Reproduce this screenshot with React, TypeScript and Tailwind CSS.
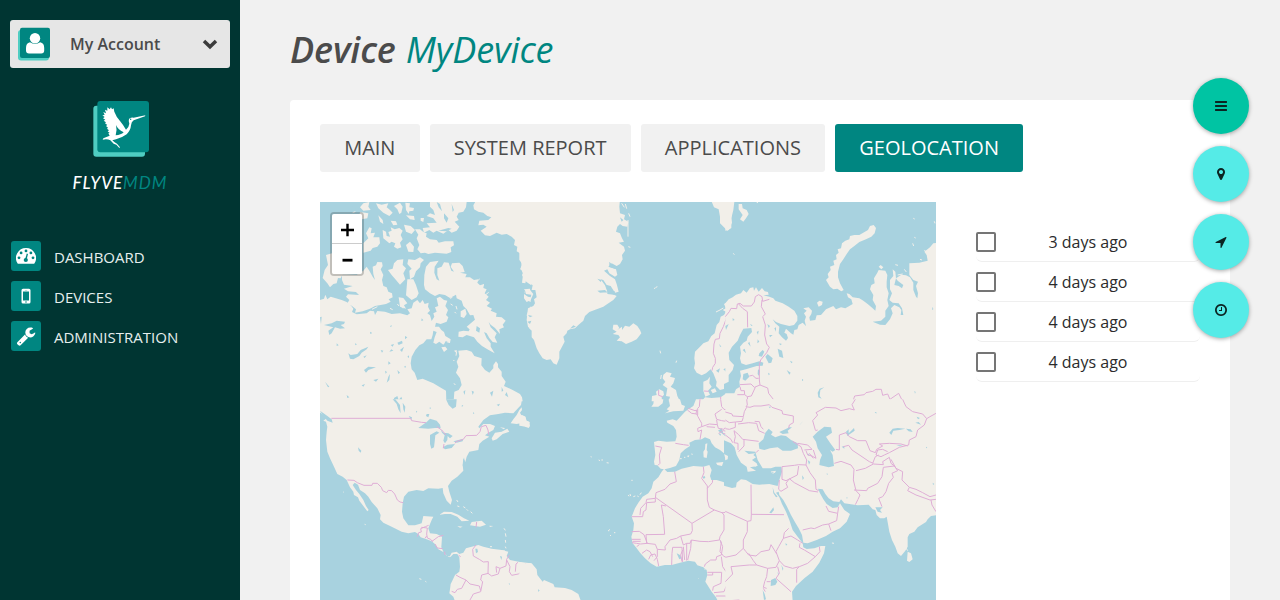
import React from "react";

const SEA = "#a8d2df";
const LAND = "#f2efe9";

type Sector = { x: number; y: number; land: string; water: string; islets: string; borders: string };

/* The map is divided in six sectors; each is drawn in thirds of a pixel. */
const SECTORS: Sector[] = [
  {
    x: 0,
    y: -2,
    land: `M18,165 L36,160 60,215 68,222 62,235 54,234 50,250 40,252 30,262 22,250 8,234 14,210 24,195Z
M66,222 L110,224 130,212 140,200 148,212 158,230 165,240 160,222 158,200 168,196 172,186 186,187 188,198 182,208 190,225 186,240 190,258 200,262 205,275 216,280 218,292 206,298 212,305 198,312 182,315 165,318 150,326 128,334 105,338 108,328 96,318 82,310 88,300 78,290 84,283 117,285 108,276 84,274 72,266 98,258 72,254 66,240Z
M0,300 L12,296 16,284 22,298 32,290 45,294 65,300 80,306 94,318 100,326 96,336 110,343 140,340 150,332 162,334 165,345 172,333 195,335 215,342 240,340 262,346 270,340 262,328 275,325 280,308 292,300 300,310 308,300 314,312 326,308 324,320 330,332 322,340 330,346 335,363 343,350 340,340 350,335 345,322 355,318 350,295 360,290 372,300 382,302 376,318 384,330 378,345 385,352 380,365 362,372 348,368 345,380 357,380 364,390 372,396 376,408 392,418 390,428 378,422 370,434 358,425 348,432 340,428 344,412 350,396 340,392 338,405 334,418 320,418 310,430 298,436 286,450 275,470 272,490 275,508 284,518 292,540 308,536 340,550 360,562 378,572 379,604 -3,604 -3,300Z
M401,604 L403,575 416,570 425,555 420,535 408,518 415,500 410,485 418,468 415,452 440,450 455,455 463,468 485,475 484,496 495,510 508,518 520,505 520,495 528,484 534,492 534,502 545,515 545,528 557,545 552,558 578,570 600,582 606,592 608,604Z
M312,255 L313,225 318,200 330,186 356,182 344,200 343,218 350,238 358,242 352,225 352,205 365,200 372,187 386,188 394,212 402,215 392,200 396,190 418,188 428,198 434,216 420,218 440,222 436,232 450,232 462,240 475,238 472,248 480,256 492,252 490,264 500,268 494,280 506,290 498,300 510,308 500,318 516,326 512,332 530,340 528,350 545,352 557,362 548,374 552,382 538,388 540,402 525,384 512,374 506,366 512,382 530,400 524,412 532,428 518,426 508,414 500,400 492,396 500,415 512,430 512,440 524,460 506,450 486,438 472,425 462,412 440,405 428,412 415,410 416,395 430,392 446,394 458,372 465,360 460,345 450,346 440,328 430,318 425,302 410,295 408,284 390,294 375,285 358,282 345,288 330,280 315,268Z
M204,210 L218,206 222,190 232,180 250,178 248,195 258,205 250,220 256,238 240,254 228,240 215,225Z
M265,178 L285,180 300,172 312,180 302,190 300,202 288,214 282,230 270,238 268,212 275,206 262,192Z
M262,238 L280,238 288,255 296,280 290,292 275,300 258,286Z
M285,88 L300,88 310,96 320,100 318,110 330,118 350,120 356,128 375,124 400,124 402,136 392,142 394,156 380,161 345,158 325,162 315,158 302,160 292,148 298,135 290,115 295,104Z
M330,6 L440,6 438,22 430,35 416,38 410,50 416,60 404,65 418,80 410,92 395,98 385,90 370,101 350,92 340,98 328,90 312,98 308,84 330,82 320,70 350,68 340,55 320,48 330,40 345,45 340,30 330,20Z
M470,-2 L460,16 462,28 475,35 490,38 502,48 514,52 505,60 478,62 475,76 490,74 500,80 482,92 495,106 510,108 530,98 545,104 560,102 575,110 585,120 582,135 592,140 590,154 600,160 602,182 606,198 600,208 612,212 606,225 612,240 625,250 634,256 634,-2Z
M120,36 L145,40 142,55 125,58 118,48Z M130,10 L148,6 145,20 152,30 130,32 120,22Z
M130,130 L145,115 138,100 148,82 155,85 152,100 165,98 160,112 178,112 180,130 172,140 158,144 152,152 130,158Z
M188,90 L198,95 200,108 210,110 205,96 215,92 212,82 224,88 238,84 248,92 242,105 248,118 240,128 244,142 232,146 222,140 226,130 215,125 208,130 190,115Z
M258,135 L270,125 282,140 280,156 265,155Z M252,74 L272,78 285,90 275,102 258,95Z
M168,10 L185,14 205,10 200,22 210,30 218,38 208,48 190,38 175,25Z M175,46 L188,60 190,72 180,65Z
M240,8 L248,20 244,38 238,42 232,28 222,18Z M256,8 L270,10 268,22 282,24 280,32 268,34 266,42 258,30Z
M258,46 L282,48 284,60 270,58Z M212,62 L228,64 232,74 220,76Z M302,54 L312,54 310,66 302,62Z
M422,334 L436,326 440,342 432,354 422,350Z M440,380 L470,355 478,370 500,388 485,405 462,400Z
M236,292 L250,294 262,310 252,316 258,326 240,320Z M364,442 L376,440 382,448 372,456Z M402,452 L410,450 410,460Z
M612,268 L630,266 632,285 622,282Z M632,285 L620,300 632,306Z M632,318 L620,345 628,385 634,390Z`,
    water: `M100,6 L118,12 115,25 95,30Z M350,6 L356,22 366,34 360,12Z M372,40 L385,55 380,68 372,55Z M395,12 L402,30 398,36Z M355,92 L385,84 395,86 380,94Z
M85,460 L92,465 112,462 122,450 145,440 140,448 125,458 118,468 100,478 90,476Z
M12,375 L35,370 50,362 75,365 72,372 62,375 75,385 60,386 45,382 35,400 28,405 25,392 40,382Z M132,510 L145,500 168,502 145,510 138,518Z
M205,530 L210,522 208,540 200,548Z M232,510 L240,518 235,522Z M212,435 L222,432 218,440Z M232,428 L246,422 248,430 236,435Z M208,455 L214,448 220,452Z
M240,450 L252,440 246,456Z M205,484 L212,490 205,494Z M160,540 L175,536 168,545Z M125,556 L135,552 130,560Z M222,594 L232,588 236,600 244,590 248,602 222,602Z
M400,545 L405,555 398,562Z M510,578 L520,572 516,590Z M430,575 L436,570 434,585Z M545,560 L550,572 545,575Z M560,576 L565,592 555,585Z M455,572 L462,575 458,585Z
M470,378 L480,385 478,398 468,392Z M488,484 L495,486 490,492Z M0,352 L5,350 3,372Z M15,545 L28,560 24,562Z M80,585 L88,592 82,594Z M182,450 L190,452 186,458Z M255,408 L262,412 255,418Z
M50,430 L56,436 50,438Z M130,470 L140,466 134,474Z M195,512 l6,4 -4,5Z M252,500 l6,-3 -2,7Z M105,430 l6,3 -5,3Z M262,470 l5,-4 0,8Z M150,395 l7,4 -6,3Z M305,355 l5,6 -6,2Z M210,378 l6,-2 -3,6Z`,
    islets: `M98,38 l8,-3 M220,65 l8,3 M268,52 l12,4 M392,312 l6,4 M408,318 l3,10 M404,336 l4,4 M366,424 l8,5 M380,425 l10,3 M410,455 l-2,12 M400,480 l3,3 M402,550 l4,5 M210,325 l8,4 M232,312 l5,6 M245,320 l4,5 M390,295 l7,-3 M172,320 l-16,8 M470,245 l9,-8 M480,262 l12,-8 M496,285 l10,-8`,
    borders: "",
  },
  {
    x: 200,
    y: -2,
    land: `M-2,-2 L300,-2 298,20 300,40 315,45 312,58 325,65 322,80 308,78 300,72 292,80 288,95 300,100 306,115 312,125 296,128 312,140 315,152 306,165 308,178 300,192 290,198 275,190 265,200 288,208 292,225 285,230 268,220 262,208 252,212 270,228 285,238 290,252 296,275 285,278 272,258 260,255 250,240 242,238 255,256 262,275 290,288 280,300 262,312 250,320 230,328 208,336 195,348 190,362 175,375 165,385 150,388 142,392 140,400 130,410 134,425 126,440 118,455 118,475 110,494 100,490 92,478 80,480 68,475 58,460 50,445 42,420 35,412 35,392 24,380 20,360 22,340 24,325 40,318 45,310 42,298 50,292 46,270 35,270 38,256 28,248 30,238 20,232 16,250 6,248 8,232 12,228 2,205 6,190 -2,180Z
M12,275 L30,270 40,282 32,300 20,306 12,295Z
M280,374 L292,374 298,384 292,390 306,380 306,390 315,377 328,380 340,370 352,378 360,390 364,400 350,418 335,425 318,432 305,424 290,422 300,412 295,405 278,402 290,395 278,388Z
M572,-2 L582,22 596,28 600,50 600,70 612,82 622,92 634,84 634,-2Z
M634,300 L612,312 618,325 608,330 618,335 612,345 602,350 598,366 590,375 584,400 574,408 565,424 550,430 540,440 525,455 523,475 525,490 522,505 530,518 545,526 558,520 572,508 580,520 590,545 588,558 600,570 620,565 634,562Z
M550,572 L550,545 562,540 570,530 568,550 575,560 564,572 570,584 556,590Z M572,570 L585,565 590,575 578,580Z
M430,524 L440,516 455,520 450,530 465,534 460,550 452,560 468,570 472,588 480,604 446,604 450,590 438,588 442,565 428,555 436,545 428,535Z
M395,604 L396,588 410,585 408,575 418,568 430,574 432,584 425,592 426,604Z
M630,572 L602,592 575,594 555,592 545,604 634,604Z`,
    water: `M262,256 L272,262 272,275 285,274 282,284 262,282Z M232,272 L255,270 262,277 240,278Z M232,236 L245,240 242,246Z M268,185 L278,196 290,200 285,206 268,200Z M300,52 L310,60 305,65Z M588,512 L600,505 596,518Z M610,508 L622,502 618,515Z M598,432 L604,440 600,440Z M14,270 L18,282 34,284 32,292 24,290 12,282Z M160,376 L150,386 168,380Z M24,345 L38,348 30,352Z M22,365 L34,362 30,372Z`,
    islets: `M402,266 l5,-3 M408,262 l4,-2 M420,452 l2,8 M468,488 l2,-6 M324,60 l0,50 M316,12 l4,14 M326,40 l4,10 M325,140 l6,2 M424,525 l-2,12 M600,330 l10,-6 M588,336 l12,-6 M305,10 l8,12`,
    borders: `M628,336 L622,340 618,358 610,380 600,400 598,416 586,418 582,432 580,460 586,475 586,490 578,502 576,512 M416,570 L416,586 428,590 M552,573 L566,574 M602,590 L602,603 M536,600 L545,596`,
  },
  {
    x: 406,
    y: -2,
    land: `M-2,-2 L26,-2 22,30 16,55 18,68 8,90 -2,92Z M38,12 L48,12 50,25 62,30 68,42 60,55 52,65 42,58 50,45 38,28Z
M426,90 L432,78 443,75 450,84 446,100 436,110 420,118 400,126 385,138 372,148 362,162 352,178 342,192 336,215 336,232 342,250 353,270 346,274 334,266 322,268 312,260 300,240 308,232 305,222 314,210 312,200 325,195 322,182 332,178 330,165 338,158 335,148 345,145 348,130 358,122 370,118 372,108 385,105 400,105Z
M-2,310 L8,298 20,292 30,284 45,280 52,270 62,278 72,264 82,262 84,272 90,262 98,275 108,264 116,274 126,276 128,284 112,286 130,290 142,295 148,302 170,310 188,320 205,332 214,348 214,362 204,375 190,378 165,372 150,366 140,358 148,370 160,380 158,400 168,412 180,422 186,414 182,402 175,398 180,386 195,400 202,404 205,390 214,388 218,375 230,368 240,378 236,362 240,350 234,340 242,332 232,325 248,322 258,332 256,342 250,352 252,362 268,360 272,346 285,345 300,328 322,318 330,328 345,322 358,325 370,318 380,312 376,298 366,292 362,280 370,282 380,292 400,295 412,302 425,312 440,325 448,332 450,318 440,300 442,285 432,268 436,255 446,250 444,235 454,218 458,210 478,212 484,225 482,245 482,262 488,280 484,300 488,318 478,332 478,350 465,362 440,365 462,374 478,375 492,358 500,340 495,325 505,315 520,322 526,330 524,345 532,345 528,325 518,310 500,308 490,300 498,280 492,268 492,240 502,228 500,208 508,215 510,235 505,255 518,258 528,265 532,255 515,242 510,235 526,224 540,226 552,232 562,248 562,270 570,290 574,295 576,280 570,258 576,245 562,240 550,225 550,190 580,188 605,182 602,165 595,155 612,142 622,130 634,128 634,604 -2,604Z
M273,308 L280,302 290,305 288,315 278,320Z M458,200 L464,195 472,202 466,208Z`,
    water: `M52,386 L76,384 78,396 65,410 62,422 52,428 42,440 45,460 42,475 46,490 60,495 80,490 100,484 112,488 110,497 92,498 72,504 60,508 42,512 45,528 40,545 42,560 30,568 25,580 -6,580 -6,552 8,545 8,525 20,510 24,495 10,480 8,458 18,440 35,422 42,405Z
M52,522 L65,518 70,530 58,542 50,538Z M118,470 L125,462 140,475 136,488 128,490Z M96,508 L102,512 98,528 95,522Z M155,446 L168,452 172,474 160,470Z M160,430 L168,432 162,436Z M182,510 L194,518 190,524Z M124,372 L132,378 128,384Z M145,385 L150,382 150,395Z M130,405 L140,405 132,412Z M95,418 L100,425 94,430Z M66,430 L70,425 74,440Z M50,450 L56,446 60,460Z M100,460 L110,450 115,455 108,470 98,468Z M126,518 l6,4 -4,4Z M228,536 l4,4 -4,4Z M20,354 L26,360 20,362Z M-2,378 L8,372 0,390Z M92,396 l6,-4 -2,12Z M72,372 l8,4 -4,2Z M192,482 l8,4 -4,4Z M275,578 l6,-12 14,-4 -12,8 -2,18 6,8 -10,-4Z M565,572 l4,4 -2,5Z M620,320 l2,8 -4,2Z`,
    islets: `M22,160 l3,4 M560,130 l3,8 M508,194 l8,2 M535,208 l6,8 M625,64 l2,6 M562,55 l4,2 M582,178 l6,2 M565,112 l4,2 M595,150 l8,8 M600,160 l8,3 M92,7 l4,1 M515,225 l15,-3`,
    borders: `M-2,350 L10,335 15,325 32,326 34,312 42,310 52,318 76,318 85,306 88,290 98,284 108,290 110,304 130,298 M38,312 L50,325 64,335 65,382 M108,300 L106,320 118,342 110,350 118,375 116,405 122,432 130,442 122,458 104,480 100,495 100,540 102,555 M70,528 L80,526 90,535 98,535 M42,554 L75,552 85,562 102,555 125,564 128,580 142,598 M42,560 L45,572 55,572 56,584 34,584 M56,584 L64,590 76,588 88,562 M64,590 L65,603 M382,600 L386,588 415,584 420,578 440,574 450,568 466,568 470,586 485,582 492,598 518,580 528,600`,
  },
  {
    x: 0,
    y: 198,
    land: `M-2,-2 L-2,36 12,46 20,55 10,62 18,65 22,80 20,95 18,120 22,155 30,175 42,200 52,222 68,230 80,240 90,262 100,275 102,285 114,292 118,302 130,318 142,334 146,330 138,318 130,300 118,282 108,270 98,255 104,248 114,254 120,270 135,280 145,290 155,306 172,325 182,345 180,358 190,368 215,380 245,395 265,400 285,396 295,402 302,412 320,418 335,424 345,432 355,448 370,456 378,466 392,470 400,462 412,462 418,472 420,500 418,515 405,525 398,540 392,552 390,568 388,580 400,590 405,604 633,604 633,490 600,486 570,480 560,468 565,455 545,450 515,446 490,440 475,435 455,440 438,445 430,458 418,462 410,455 395,458 388,472 372,460 364,442 366,410 350,402 330,400 325,385 335,360 340,350 310,348 305,370 285,376 265,376 250,355 246,335 248,310 252,290 265,275 290,270 310,273 325,265 355,266 368,264 370,280 380,302 392,314 396,300 388,275 384,258 395,242 412,230 430,212 428,195 430,175 436,186 440,170 448,155 475,150 478,132 488,122 508,110 495,106 505,98 520,90 525,78 510,72 490,72 478,85 475,80 490,60 510,46 535,42 555,38 580,40 603,15 606,-2Z
M515,115 L525,98 545,95 562,86 568,95 548,102 530,118 518,122Z M540,82 L555,84 552,88Z
M605,22 L598,30 590,45 580,58 572,70 590,72 602,70 598,78 612,74 618,82 626,76 629,66 620,62 616,50 604,46 600,38 606,30Z
M358,344 L372,335 395,336 415,344 432,355 448,362 425,364 412,350 392,342 375,342Z M455,366 L485,362 498,374 480,380 465,378 450,376Z M412,378 L428,380 420,383Z M508,377 L520,378 510,381Z`,
    water: `M0,32 L18,45 35,58 38,68 22,62 10,48Z M218,-2 L230,12 235,28 242,40 240,15 226,-2Z M248,8 L256,20 254,38 250,28Z M378,-2 L410,-2 408,20 398,26 386,15Z
M295,84 L320,66 330,56 350,62 360,74 362,84 345,84 325,86Z M330,105 L350,94 358,98 346,106 344,125 342,142 334,146 330,132Z M362,88 L370,98 385,100 398,108 390,115 383,108 382,120 375,130 370,122 374,106 366,98Z M368,142 L382,134 405,132 395,144 375,148Z M400,124 L415,120 430,116 428,124 410,128Z
M320,42 L328,42 325,52 318,48Z M266,48 L276,52 274,60Z M114,142 L124,152 122,158 116,152Z M466,446 L472,446 474,456 468,460Z M540,468 l6,2 -2,10Z M530,14 l10,-3 -4,8Z M550,48 l18,-8 -6,12Z M525,55 L560,52 558,66 540,64 530,78Z M432,172 L428,198 434,184Z M566,548 l4,4 -2,3Z M426,14 l4,4 -5,2Z M460,35 l3,6 -4,0Z M288,32 l4,3 -4,3Z M282,10 l4,8 M330,20 l3,6 -4,0Z`,
    islets: `M410,300 l4,6 M412,318 l6,2 M430,320 l6,4 M452,335 l5,5 M552,385 l4,6 M556,400 l2,10 M556,420 l1,8 M556,440 l2,5 M545,452 l10,1 M440,328 l4,4 M510,440 l6,0 M70,276 l2,1 M134,373 l3,1 M298,536 l6,2 M316,544 l3,2`,
    borders: `M34,55 L272,55 275,62 305,67 318,68 M350,80 L365,90 378,105 M370,145 L372,132 M405,130 L408,125 430,118 438,107 470,106 480,95 484,80 498,76 504,90 506,104 M82,240 L102,241 112,248 132,256 156,256 158,250 172,250 184,262 188,272 200,278 205,271 215,272 224,282 232,300 240,306 250,308 M292,410 L296,398 304,396 302,386 316,380 326,376 M304,382 L322,384 320,402 322,414 332,418 338,425 M315,415 L320,408 M336,424 L355,410 370,406 M345,432 L352,444 368,446 M374,455 L375,465 M416,466 L422,470 M468,435 L458,448 460,468 478,478 490,486 505,485 504,520 515,528 535,522 540,505 528,500 530,518 M540,505 L558,498 560,478 568,465 M560,480 L570,500 568,515 575,526 595,522 605,515 612,518 632,520 M586,515 L588,492 594,487 M617,490 L616,518 M505,520 L485,525 482,540 488,545 482,575 460,582 450,600 M408,525 L420,532 438,540 425,565 412,568 405,578 395,574 M438,540 L450,552 478,558 482,572 M470,366 L468,382`,
  },
  {
    x: 200,
    y: 198,
    land: `M-2,46 L8,46 16,50 18,62 28,66 30,78 26,84 16,80 4,78 -2,76Z
M402,-2 L400,12 394,20 415,20 428,10 430,-2Z M446,-2 L450,18 440,28 448,32 435,40 460,34 490,32 495,18 485,14 480,-2Z
M632,-2 L528,-2 520,18 505,28 495,35 480,52 470,62 458,58 440,62 442,68 460,78 468,90 470,110 466,124 440,125 415,122 402,126 404,145 406,165 402,185 404,195 412,196 422,206 434,208 450,204 468,198 478,180 482,160 495,148 510,138 508,128 525,120 545,118 555,112 570,118 575,130 585,142 600,150 612,160 618,185 625,172 620,158 632,164 633,125 620,112 605,100 594,92 605,85 610,100 633,120Z
M633,258 L610,246 590,240 574,240 570,228 575,210 568,195 550,200 520,198 485,206 465,215 442,216 432,206 425,215 415,232 400,245 395,265 385,280 368,290 355,308 345,325 335,350 342,370 340,390 334,410 338,430 350,445 360,458 375,475 392,490 410,500 435,495 455,495 480,488 505,482 525,485 532,496 550,502 560,510 562,525 556,545 575,575 588,592 594,604 633,604Z
M-2,486 L15,490 35,490 50,508 52,525 68,545 72,540 100,552 104,562 135,564 155,570 175,582 183,604 -2,604Z
M556,132 L562,130 560,150 563,155 560,174 551,172 550,155 555,148Z M588,188 L610,186 606,198 592,195Z M500,168 L508,166 506,172Z`,
    water: `M470,460 L480,465 485,475 478,478Z M548,230 l6,-2 2,6 -6,2Z M54,568 l5,3 -4,5Z M595,100 l8,2 -2,6Z M2,520 l2,3Z M562,500 l3,3Z M600,420 l4,6 -3,2Z`,
    islets: `M212,170 l3,1 M236,180 l4,2 M244,180 l5,0 M260,188 l6,1 M334,241 l4,0 M324,286 l4,2 M330,282 l2,6 M340,290 l6,-2 M352,288 l4,2 M360,284 l4,-6 M264,392 l4,0 M268,388 l2,2 M270,405 l3,3 M282,398 l4,0 M480,176 l5,0 M514,162 l4,1 M536,536 l1,1 M555,505 l0,4 M492,172 l4,0`,
    borders: `M466,130 L490,134 506,136 M406,138 L425,142 418,165 420,190 414,196 M502,30 L515,40 530,42 534,50 545,70 545,80 533,85 534,95 545,90 540,118 M505,25 L525,32 530,30 528,42 M540,-2 L538,20 533,25 533,45 M602,-2 L605,20 612,28 632,32 M605,28 L585,42 590,58 605,62 632,66 M545,80 L568,72 592,74 590,60 M592,74 L595,85 612,88 618,80 632,80 M560,80 L585,82 M596,100 L610,92 632,96 M608,100 L632,105 M464,215 L469,245 450,252 435,268 408,278 406,295 M406,306 L380,308 378,330 370,335 368,350 335,350 M378,308 L380,298 406,295 406,306 M406,292 L516,370 M360,345 L362,325 378,308 M378,404 L434,403 430,350 424,315 438,318 M516,370 L583,330 568,322 562,300 562,258 545,235 552,218 550,200 M562,265 L577,248 578,240 M583,330 L606,338 612,338 632,330 M516,370 L517,392 512,402 482,408 470,415 450,420 435,440 436,450 412,448 406,433 380,430 378,404 M606,338 L612,345 612,390 600,410 598,420 565,425 540,424 514,420 510,430 500,430 490,435 482,408 M514,420 L512,445 503,480 M335,395 L358,394 372,404 378,420 382,430 362,432 350,430 336,428 M336,418 L362,418 M338,424 L362,424 M350,440 L358,434 M366,460 L380,450 390,455 398,470 M386,478 L392,465 405,462 412,478 416,498 M412,448 L412,470 402,482 M455,495 L456,460 458,442 486,442 488,486 M490,440 L494,480 M488,450 L482,465 486,485 M500,430 L500,482 M600,420 L608,440 604,465 590,470 588,480 572,480 556,492 553,500 M604,425 L600,455 612,470 632,468 M604,470 L608,500 618,515 632,512 M562,517 L605,517 603,550 580,560 578,572 M562,525 L578,525 578,517 M582,578 L612,575 618,560 632,545 M588,588 L618,588 622,603`,
  },
  {
    x: 406,
    y: 198,
    land: `M-2,-2 L633,-2 633,345 615,348 605,358 600,366 575,382 565,395 550,402 545,412 545,440 538,452 525,468 515,460 508,440 498,420 490,395 486,372 482,350 475,355 462,355 452,345 448,330 440,328 428,314 395,316 370,312 355,310 345,298 340,306 322,304 308,295 298,282 290,268 276,266 282,280 292,298 302,312 320,324 335,322 342,310 355,330 372,342 362,365 342,385 320,395 300,408 272,420 245,430 232,428 228,405 218,385 208,368 195,345 182,318 172,300 160,285 158,275 150,278 160,292 168,312 180,335 190,360 200,390 215,410 230,430 232,442 242,447 265,445 285,438 298,438 294,460 280,488 260,515 235,535 210,558 198,575 200,604 -2,604Z
M545,455 L555,460 560,478 550,486 543,482Z`,
    water: `M-6,121 L15,130 26,142 32,165 45,188 62,200 65,215 90,212 72,202 95,198 92,190 78,180 90,172 82,165 88,160 68,162 55,152 88,155 95,180 110,205 135,205 148,200 166,200 168,215 160,240 155,258 130,252 100,254 80,252 60,240 45,238 32,248 30,262 18,264 -6,257 -6,182 5,178 6,168 -6,162Z
M100,146 L98,130 112,118 118,98 128,86 140,96 135,104 148,112 165,106 180,108 195,120 215,130 216,145 195,152 170,152 155,142 132,145 115,150Z M160,96 L178,88 190,82 198,82 185,92 188,100 170,102Z
M260,110 L275,95 295,80 315,82 318,98 300,110 312,128 328,150 320,155 312,150 320,165 324,198 308,202 280,195 282,180 288,165 275,145 270,125Z
M490,98 L500,86 515,84 538,86 520,90 502,92 496,105Z M360,95 L368,88 368,100 384,84 386,92 372,102 364,108Z M568,68 L578,66 585,74Z M572,50 l10,4 -6,4Z M540,86 l8,8 12,2 -6,-8Z M446,36 l5,0 0,5Z M511,136 l20,0 -10,3Z M220,76 L232,62 224,72Z M245,180 l8,6 -4,8Z M347,140 l8,-2 0,8Z M228,226 l6,8 -4,6Z M302,220 l4,2 -3,3Z M362,290 l3,4 -3,2Z M620,248 l5,4 -4,3Z
M135,540 L148,534 154,545 148,555 134,558Z M140,262 L145,278 155,290 150,292 142,280Z M130,338 L142,322 144,330 136,340Z M178,430 l6,3 -4,4Z M166,494 l6,12 -2,6Z M110,570 L116,582 120,598 114,600Z M155,516 l4,6 -3,2Z M122,518 l2,5Z M600,140 l4,3 -4,2Z M245,160 l6,5 -4,2Z M448,322 L470,322 462,330 468,338 455,335Z M128,20 l6,0 -2,5Z`,
    islets: `M135,216 l14,-2 M140,220 l8,-4 M70,175 l5,5 M60,190 l6,4 M68,212 l14,-1 M318,429 l6,1 M75,168 l4,8 M84,195 l4,5 M540,444 l5,8`,
    borders: `M62,-2 L64,15 60,20 72,22 84,18 105,18 130,14 138,22 168,32 170,42 202,48 202,68 190,75 188,85 M-2,36 L18,42 20,48 52,50 55,35 62,22 M-2,60 L10,68 28,66 48,64 52,52 M28,66 L28,82 10,88 -2,86 M36,72 L68,68 92,70 98,92 116,100 M86,64 L100,65 105,80 112,88 M24,92 L38,104 50,118 98,124 M24,92 L28,110 24,128 36,130 36,150 M54,118 L54,138 38,155 M-2,105 L15,118 20,128 M90,158 L98,150 M268,90 L260,62 275,45 270,38 298,22 330,24 345,32 370,26 385,30 378,14 388,-2 M275,90 L268,92 M530,-2 L540,20 560,35 590,42 602,56 595,75 575,90 570,110 550,120 548,135 520,142 490,158 475,165 465,170 450,165 455,150 470,148 485,155 M602,56 L612,50 630,40 M340,150 L340,105 360,98 370,110 395,122 420,122 432,152 448,158 452,148 470,138 460,132 490,130 525,132 545,138 M340,150 L330,148 M352,140 L368,136 378,150 405,168 430,185 442,190 M325,190 L345,184 375,195 384,208 382,240 390,272 402,285 396,298 388,314 M390,212 L418,205 442,192 472,194 470,185 490,172 495,190 505,198 472,202 468,230 455,250 425,265 422,272 384,270 M505,198 L515,212 498,220 502,232 488,250 480,275 470,290 458,295 468,320 M495,178 L510,205 530,215 528,240 550,262 570,268 590,278 612,290 630,285 M550,262 L545,272 570,285 612,300 630,298 M615,300 L618,315 630,335 M440,190 L448,170 458,165 M168,200 L205,196 218,194 240,195 242,180 232,160 225,140 200,124 M215,130 L245,135 258,148 235,150 M240,152 L245,165 258,168 270,175 262,150 M250,160 L262,175 M240,195 L252,218 268,240 270,268 278,272 M218,198 L214,225 180,242 168,238 168,200 M190,236 L205,248 250,272 276,276 M190,236 L180,250 185,262 165,274 158,268 160,240 M75,254 L76,343 174,344 M76,343 L75,362 64,364 -2,334 M64,364 L64,395 52,420 52,445 60,455 68,465 90,468 105,455 130,450 135,434 145,450 152,462 M52,445 L30,465 -2,472 M68,460 L82,482 92,495 70,495 15,500 20,522 -2,545 M92,495 L125,505 150,502 160,482 150,455 158,440 172,415 175,398 188,385 M172,415 L195,408 215,420 230,430 M222,430 L220,442 235,450 268,470 282,455 280,440 M268,470 L245,490 220,500 212,508 212,548 M160,482 L175,498 200,505 220,500 M155,500 L160,520 150,535 195,575 M125,505 L122,530 116,545 112,562 122,565 M122,545 L134,545 M112,565 L118,575 M230,390 L255,384 265,386 290,375 308,372 315,392 M308,372 L332,362 335,340 338,320 M335,340 L308,334 300,318 M-2,603 L40,600`,
  },
];

function GeoMap() {
  return (
    <svg width="616" height="398" viewBox="0 0 616 398" className="block">
      <rect width="616" height="398" fill={SEA} />
      {SECTORS.map((s, i) => (
        <g key={i} transform={`translate(${s.x} ${s.y}) scale(.33333)`} strokeLinejoin="round">
          <path d={s.land} fill={LAND} />
          <path d={s.water} fill={SEA} />
          <path d={s.islets} fill="none" stroke={LAND} strokeWidth="3" />
          <path d={s.borders} fill="none" stroke="#dfaed6" strokeWidth="3" />
        </g>
      ))}
    </svg>
  );
}

function Glyph({ d, size, className }: { d: string; size: number; className?: string }) {
  return (
    <svg width={size} height={size} viewBox="0 0 1792 1792" fill="currentColor" className={className}>
      <path d={d} />
    </svg>
  );
}

const BARS =
  "M1664 1344v128q0 26-19 45t-45 19h-1408q-26 0-45-19t-19-45v-128q0-26 19-45t45-19h1408q26 0 45 19t19 45zm0-512v128q0 26-19 45t-45 19h-1408q-26 0-45-19t-19-45v-128q0-26 19-45t45-19h1408q26 0 45 19t19 45zm0-512v128q0 26-19 45t-45 19h-1408q-26 0-45-19t-19-45v-128q0-26 19-45t45-19h1408q26 0 45 19t19 45z";
const MARKER =
  "M1152 640q0-106-75-181t-181-75-181 75-75 181 75 181 181 75 181-75 75-181zm256 0q0 109-33 179l-364 774q-16 33-47.5 52t-67.5 19-67.5-19-46.5-52l-365-774q-33-70-33-179 0-212 150-362t362-150 362 150 150 362z";
const ARROW =
  "M1593 349l-640 1280q-17 35-57 35-5 0-15-2-22-5-35.5-22.5t-13.5-39.5v-576h-576q-22 0-39.5-13.5t-22.5-35.5 4-42 29-30l1280-640q13-7 29-7 27 0 45 19 15 14 18.5 34.5t-6.5 39.5z";
const CLOCK =
  "M1024 544v448q0 14-9 23t-23 9h-320q-14 0-23-9t-9-23v-64q0-14 9-23t23-9h224v-352q0-14 9-23t23-9h64q14 0 23 9t9 23zm416 352q0-148-73-273t-198-198-273-73-273 73-198 198-73 273 73 273 198 198 273 73 273-73 198-198 73-273zm224 0q0 209-103 385.5t-279.5 279.5-385.5 103-385.5-103-279.5-279.5-103-385.5 103-385.5 279.5-279.5 385.5-103 385.5 103 279.5 279.5 103 385.5z";
const WRENCH =
  "M448 1472q0-26-19-45t-45-19-45 19-19 45 19 45 45 19 45-19 19-45zm644-420l-682 682q-37 37-90 37-52 0-91-37l-106-108q-38-36-38-90 0-53 38-91l681-681q39 98 114.5 173.5t173.5 114.5zm634-435q0 39-23 106-47 134-164.5 217.5t-258.5 83.5q-185 0-316.5-131.5t-131.5-316.5 131.5-316.5 316.5-131.5q58 0 121.5 16.5t107.5 46.5q16 11 16 28t-16 28l-293 169v224l193 107q5-3 79-48.5t135.5-81 70.5-35.5q15 0 23.5 10t8.5 25z";

function Gauge() {
  return (
    <svg width="20" height="16" viewBox="0 0 20 16">
      <path d="M10 0A10 10 0 0 0 1.5 15.3Q1.8 15.8 2.3 15.8H17.7Q18.2 15.8 18.5 15.3A10 10 0 0 0 10 0Z" fill="#fff" />
      <g fill="#008681">
        <circle cx="3" cy="9.8" r="1.4" />
        <circle cx="5.1" cy="4.9" r="1.4" />
        <circle cx="10" cy="2.9" r="1.4" />
        <circle cx="14.9" cy="4.9" r="1.4" />
        <circle cx="17" cy="9.8" r="1.4" />
        <circle cx="9.8" cy="12" r="2.1" />
        <path d="M9.1 11L10.8 5.6L12 5.9L10.7 11.3Z" />
      </g>
    </svg>
  );
}

function Phone() {
  return (
    <svg width="10" height="16" viewBox="0 0 10 16">
      <path
        fillRule="evenodd"
        fill="#fff"
        d="M2 .8H8Q9.5.8 9.5 2.3V13.9Q9.5 15.4 8 15.4H2Q.5 15.4.5 13.9V2.3Q.5.8 2 .8ZM2 3.4V12.6H8V3.4ZM3.8 1.9V2.3H6.2V1.9ZM5 13.2A.8.8 0 1 0 5 14.8A.8.8 0 1 0 5 13.2Z"
      />
    </svg>
  );
}

function Avatar() {
  return (
    <svg width="34" height="34" viewBox="0 0 34 34">
      <rect x="1" y="3" width="31" height="30.5" rx="3" fill="#4fcdc2" />
      <rect x="3" y="0.7" width="30" height="30.3" rx="2" fill="#008681" />
      <path d="M13 15.2Q9 16 9 21V23.5Q9 26.5 12 26.5H24.2Q27.2 26.5 27.2 23.5V21Q27.2 16 23.2 15.2Q18 18.6 13 15.2Z" fill="#fff" />
      <circle cx="18" cy="11.2" r="5.2" fill="#fff" />
    </svg>
  );
}

function BirdLogo() {
  return (
    <svg width="56" height="57" viewBox="0 0 168 171">
      <g transform="translate(1 3)">
        <rect x="0" y="14" width="155" height="153" rx="9" fill="#4fcdc2" />
        <rect x="12" y="0" width="155" height="154" rx="9" fill="#008681" />
        <path
          fill="#fff"
          d="M27 43L34 42L30 33L38 37L35 26L42 29L42 19L49 25L53 19L56 25L61 22L63 32Q69 48 80 60Q90 72 98 86L105 78L108 68Q105 60 107 54Q111 48 121 50L156 43L155 46L121 58Q114 62 113 73Q112 88 100 100Q85 111 68 115L57 118L64 124L71 128L80 139L78 141L69 131L61 128L51 118Q42 113 28 116L30 112L49 104L45 97L49 96L43 91L47 88L41 83L44 80L38 75L42 72L35 67L38 64L31 59L36 56L29 52L34 48Z"
        />
        <path d="M68 72Q73 85 91 94Q83 102 67 103Q72 89 68 72Z" fill="#008681" />
        <circle cx="112" cy="55" r="2.2" fill="#008681" />
      </g>
    </svg>
  );
}

const NAV = [
  { label: "DASHBOARD", icon: <Gauge /> },
  { label: "DEVICES", icon: <Phone /> },
  { label: "ADMINISTRATION", icon: <Glyph d={WRENCH} size={20} /> },
];
const TABS = ["MAIN", "SYSTEM REPORT", "APPLICATIONS", "GEOLOCATION"];
const REPORTS = ["3 days ago", "4 days ago", "4 days ago", "4 days ago"];

export default function App() {
  return (
    <div className="relative flex h-[600px] w-[1280px] overflow-hidden bg-[#f1f1f1] font-['Open_Sans','Noto_Sans',sans-serif]">
      <aside className="flex w-60 shrink-0 flex-col bg-[#003532] px-2.5 pt-5">
        <button className="flex h-12 items-center rounded-[3px] bg-[#e6e6e6] pl-[7px] pr-3 text-[#4b4b4b]">
          <Avatar />
          <span className="ml-[19px] text-base font-semibold">My Account</span>
          <svg width="16" height="12" viewBox="0 0 16 12" className="ml-auto">
            <path d="M2 3L8 8.8L14 3" fill="none" stroke="#3c3c3c" strokeWidth="3.5" />
          </svg>
        </button>
        <div className="mt-8 flex flex-col items-center pl-0.5">
          <BirdLogo />
          <div className="mt-[14px] whitespace-nowrap pr-0.5 font-['Lato',sans-serif] text-[17px] font-medium italic leading-6 tracking-[1px] text-white">
            FLYVE<span className="font-normal text-[#008681]">MDM</span>
          </div>
        </div>
        <nav className="mt-[46px] flex flex-col gap-2.5 pl-px">
          {NAV.map((n) => (
            <a key={n.label} className="flex h-[30px] items-center text-[15px] text-white">
              <span className="flex h-[30px] w-[30px] items-center justify-center rounded-[3px] bg-[#008681]">{n.icon}</span>
              <span className="ml-[13px] pt-[3px] text-[#e6efee]">{n.label}</span>
            </a>
          ))}
        </nav>
      </aside>

      <main className="flex grow flex-col pl-[50px] pr-[50px]">
        <h1 className="flex h-[100px] items-center gap-2.5 text-[36px] italic tracking-[-0.12px] text-[#4b4b4b]">
          <span className="font-semibold">Device</span>
          <span className="text-[#008681]">MyDevice</span>
        </h1>
        <section className="grow rounded-t-[4px] bg-white px-[30px] pt-6">
          <div className="flex gap-2.5">
            {TABS.map((t) => (
              <button
                key={t}
                className={
                  t === "GEOLOCATION"
                    ? "h-12 rounded-[3px] bg-[#008681] px-[24.15px] text-[20px] text-white"
                    : "h-12 rounded-[3px] bg-[#f1f1f1] px-[24.15px] text-[20px] text-[#4b4b4b]"
                }
              >
                {t}
              </button>
            ))}
          </div>
          <div className="mt-[30px] flex">
            <div className="relative h-[398px] w-[616px] shrink-0">
              <GeoMap />
              <div className="absolute left-2.5 top-2.5 flex w-[34px] flex-col rounded-[4px] border-2 border-black/20 bg-clip-padding">
                <button className="flex h-[30px] items-center justify-center rounded-t-[2px] border-b border-[#ccc] bg-white pt-[3px]">
                  <svg width="14" height="14" viewBox="0 0 14 14">
                    <path d="M1 7H14M7.5 .8V13.2" stroke="#000" strokeWidth="2.4" />
                  </svg>
                </button>
                <button className="flex h-[30px] items-center justify-center rounded-b-[2px] bg-white">
                  <svg width="14" height="14" viewBox="0 0 14 14">
                    <path d="M2.5 8.2H12.5" stroke="#000" strokeWidth="2.8" />
                  </svg>
                </button>
              </div>
            </div>
            <ul className="ml-10 mt-5 w-56">
              {REPORTS.map((r, i) => (
                <li key={i} className="flex h-10 items-center rounded-[6px] border-b border-[#efefef]">
                  <span className="h-5 w-5 rounded-[2px] border-2 border-[#757575] bg-white" />
                  <span className="ml-[52.5px] text-base text-[#2b2b2b]">{r}</span>
                </li>
              ))}
            </ul>
          </div>
        </section>
      </main>

      <div className="absolute left-[1193px] top-[78px] flex flex-col gap-3 text-[#0b2422]">
        <button className="flex h-14 w-14 items-center justify-center rounded-full bg-[#00c4a3] shadow-[0_1px_4px_rgba(0,0,0,.35)]">
          <Glyph d={BARS} size={14} />
        </button>
        {[MARKER, ARROW, CLOCK].map((d) => (
          <button
            key={d}
            className="flex h-14 w-14 items-center justify-center rounded-full bg-[#55ebe7] shadow-[0_1px_4px_rgba(0,0,0,.35)]"
          >
            <Glyph d={d} size={14} />
          </button>
        ))}
      </div>
    </div>
  );
}
